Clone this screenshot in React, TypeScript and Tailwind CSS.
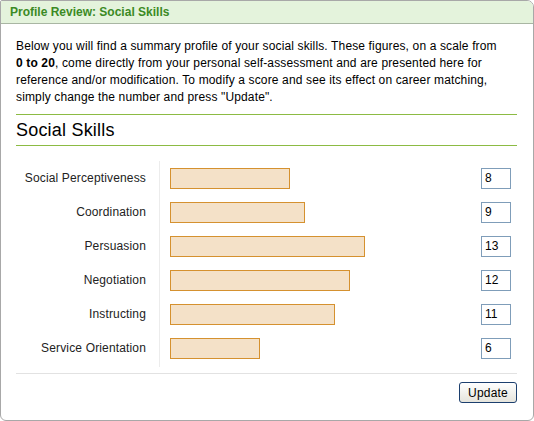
import React from "react";

const SKILLS: { name: string; score: number }[] = [
  { name: "Social Perceptiveness", score: 8 },
  { name: "Coordination", score: 9 },
  { name: "Persuasion", score: 13 },
  { name: "Negotiation", score: 12 },
  { name: "Instructing", score: 11 },
  { name: "Service Orientation", score: 6 },
];

export default function App() {
  return (
    <div className="w-[534px] h-[421px] bg-white font-['Liberation_Sans',Arial,sans-serif] text-black">
      <div className="w-[534px] h-[421px] border border-[#a8a8a8] rounded-tl-[2px] rounded-tr-[7px] rounded-b-[6px] overflow-hidden flex flex-col">
        {/* Header */}
        <div className="h-[23px] flex-shrink-0 bg-[#e4f3dc] border-b border-[#a9b6a3] px-[9px] flex items-center">
          <h1 className="text-[12px] font-bold text-[#3b8a25]">Profile Review: Social Skills</h1>
        </div>

        <div className="px-[15px] pt-[14px]">
          <p className="text-[12px] leading-[17px] w-[502px] tracking-[0.14px] whitespace-nowrap">
            Below you will find a summary profile of your social skills. These figures, on a scale from
            <br />
            <b>0 to 20</b>, come directly from your personal self-assessment and are presented here for
            <br />
            reference and/or modification. To modify a score and see its effect on career matching,
            <br />
            simply change the number and press "Update".
          </p>

          {/* Section heading */}
          <div className="mt-[8px] border-t border-b border-[#8cbb43] h-[32px] flex items-center w-[501px]">
            <h2 className="text-[18px] tracking-[0.2px]">Social Skills</h2>
          </div>

          {/* Rows */}
          <div className="mt-[15px] flex w-[500px]">
            <div className="w-[130px] flex flex-col">
              {SKILLS.map((s) => (
                <div key={s.name} className="h-[34px] flex items-center justify-end text-[12px] tracking-[0.15px] text-[#222]">
                  {s.name}
                </div>
              ))}
            </div>
            <div className="ml-[13px] w-px bg-[#ececec] h-[206px]" />
            <div className="flex-1 flex flex-col pl-[10px]">
              {SKILLS.map((s) => (
                <div key={s.name} className="h-[34px] flex items-center justify-between">
                  <div
                    className="h-[21px] bg-[#f4e1c8] border border-[#d5912f]"
                    style={{ width: s.score * 15 }}
                  />
                  <input
                    defaultValue={s.score}
                    className="w-[30px] h-[21px] border border-[#7f9db9] text-[12px] px-[3px] mr-[5px] outline-none"
                  />
                </div>
              ))}
            </div>
          </div>

          {/* Footer */}
          <div className="mt-[6px] border-t border-[#e2e2e2] w-[501px] flex justify-end pt-[8px]">
            <button className="h-[21px] w-[58px] text-[12px] tracking-[0.2px] rounded-[3px] border border-[#1c3f6e] bg-gradient-to-b from-[#ffffff] to-[#e5e4dc]">
              Update
            </button>
          </div>
        </div>
      </div>
    </div>
  );
}
